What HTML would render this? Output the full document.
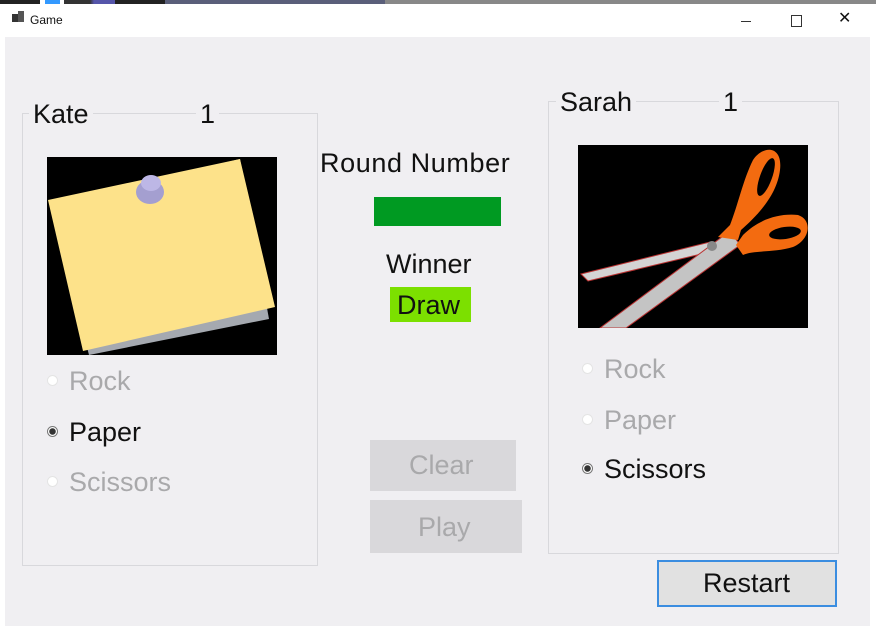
<!DOCTYPE html>
<html><head><style>
body{margin:0;width:876px;height:629px;background:#fff;position:relative;overflow:hidden;font-family:"Liberation Sans",sans-serif;}
.a{position:absolute;}
.client{left:5px;top:37px;width:865px;height:589px;background:#f0eff2;}
.gb{border:1px solid #d8d8dc;}
.t{font-size:26px;color:#111;line-height:1;white-space:nowrap;}
.lg{background:#f0eff2;padding:0 4px;}
.dis{color:#a9a9ab;}
.r{width:11px;height:11px;border-radius:50%;background:#fff;border:1px solid #e4e4e4;box-sizing:border-box;}
.r.on{border:1px solid #777;background:radial-gradient(circle,#333 0 3px,#fff 3.5px);}
</style></head><body>
<div class="a" style="left:0;top:0;width:876px;height:4px;background:linear-gradient(90deg,#222 0 40px,#fff 40px 45px,#39f 45px 60px,#fff 60px 64px,#333 64px 90px,#55a 94px 115px,#222 115px 165px,#5a5f7a 165px 385px,#888 385px 520px);"></div>
<div class="a" style="left:12px;top:14px;width:6px;height:8px;background:#333"></div>
<div class="a" style="left:18px;top:11px;width:6px;height:11px;background:#555"></div>
<div class="a t" style="left:30px;top:14px;font-size:12px;">Game</div>
<div class="a" style="left:741px;top:21px;width:10px;height:1px;background:#333"></div>
<div class="a" style="left:791px;top:15px;width:9px;height:10px;border:1px solid #333;"></div>
<div class="a t" style="left:838px;top:11px;font-size:16px;">✕</div>
<div class="a client"></div>

<div class="a gb" style="left:22px;top:113px;width:294px;height:451px;"></div>
<div class="a t lg" style="left:29px;top:101px;font-size:27px;">Kate</div>
<div class="a t lg" style="left:196px;top:101px;font-size:27px;">1</div>
<svg class="a" style="left:47px;top:157px" width="230" height="198" viewBox="0 0 230 198">
<rect width="230" height="198" fill="#000"/>
<polygon points="3,47 193,2 222,162 42,198" fill="#a5a9b0"/>
<polygon points="1,43 193,2 228,150 36,194" fill="#fde28a"/>
<ellipse cx="103" cy="35" rx="14" ry="12" fill="#a49fd0"/>
<ellipse cx="104" cy="26" rx="10" ry="8" fill="#bdb7e6"/>
</svg>
<div class="a r" style="left:47px;top:375px"></div>
<div class="a t dis" style="left:69px;top:368px;font-size:27px">Rock</div>
<div class="a r on" style="left:47px;top:426px"></div>
<div class="a t" style="left:69px;top:419px;font-size:27px">Paper</div>
<div class="a r" style="left:47px;top:476px"></div>
<div class="a t dis" style="left:69px;top:469px;font-size:27px">Scissors</div>

<div class="a t" style="left:320px;top:150px;font-size:27px;letter-spacing:0.6px">Round Number</div>
<div class="a" style="left:374px;top:197px;width:127px;height:29px;background:#009a22"></div>
<div class="a t" style="left:386px;top:251px;font-size:27px">Winner</div>
<div class="a" style="left:390px;top:287px;width:81px;height:35px;background:#7ce000"></div>
<div class="a t" style="left:397px;top:292px;font-size:27px">Draw</div>
<div class="a" style="left:370px;top:440px;width:146px;height:51px;background:#d9d8db"></div>
<div class="a t dis" style="left:409px;top:452px;font-size:27px">Clear</div>
<div class="a" style="left:370px;top:500px;width:152px;height:53px;background:#d9d8db"></div>
<div class="a t dis" style="left:418px;top:514px;font-size:27px">Play</div>

<div class="a gb" style="left:548px;top:101px;width:289px;height:451px;"></div>
<div class="a t lg" style="left:556px;top:89px;font-size:27px">Sarah</div>
<div class="a t lg" style="left:719px;top:89px;font-size:27px">1</div>
<svg class="a" style="left:578px;top:145px" width="230" height="183" viewBox="0 0 230 183">
<rect width="230" height="183" fill="#000"/>
<polygon points="3,129 132,97 140,105 10,136" fill="#d4d4d4" stroke="#b33" stroke-width="1"/>
<polygon points="22,183 152,86 162,100 48,183" fill="#c4c4c4" stroke="#b33" stroke-width="1"/>
<path d="M140,92 L152,80 C160,60 165,35 175,15 C185,0 205,0 202,25 C199,50 180,70 163,85 L160,95 Z" fill="#f36b10"/>
<path d="M158,100 L165,90 C180,75 200,68 220,70 C235,75 232,95 215,102 C195,108 175,105 165,110 Z" fill="#f36b10"/>
<ellipse cx="188" cy="32" rx="6" ry="20" fill="#000" transform="rotate(20 188 32)"/>
<ellipse cx="207" cy="88" rx="16" ry="6" fill="#000" transform="rotate(-8 207 88)"/>
<circle cx="134" cy="101" r="5" fill="#888"/>
</svg>
<div class="a r" style="left:582px;top:363px"></div>
<div class="a t dis" style="left:604px;top:356px;font-size:27px">Rock</div>
<div class="a r" style="left:582px;top:414px"></div>
<div class="a t dis" style="left:604px;top:407px;font-size:27px">Paper</div>
<div class="a r on" style="left:582px;top:463px"></div>
<div class="a t" style="left:604px;top:456px;font-size:27px">Scissors</div>

<div class="a" style="left:657px;top:560px;width:180px;height:47px;box-sizing:border-box;background:#e1e1e1;border:2px solid #3b8de0"></div>
<div class="a t" style="left:703px;top:570px;font-size:27px">Restart</div>
</body></html>
